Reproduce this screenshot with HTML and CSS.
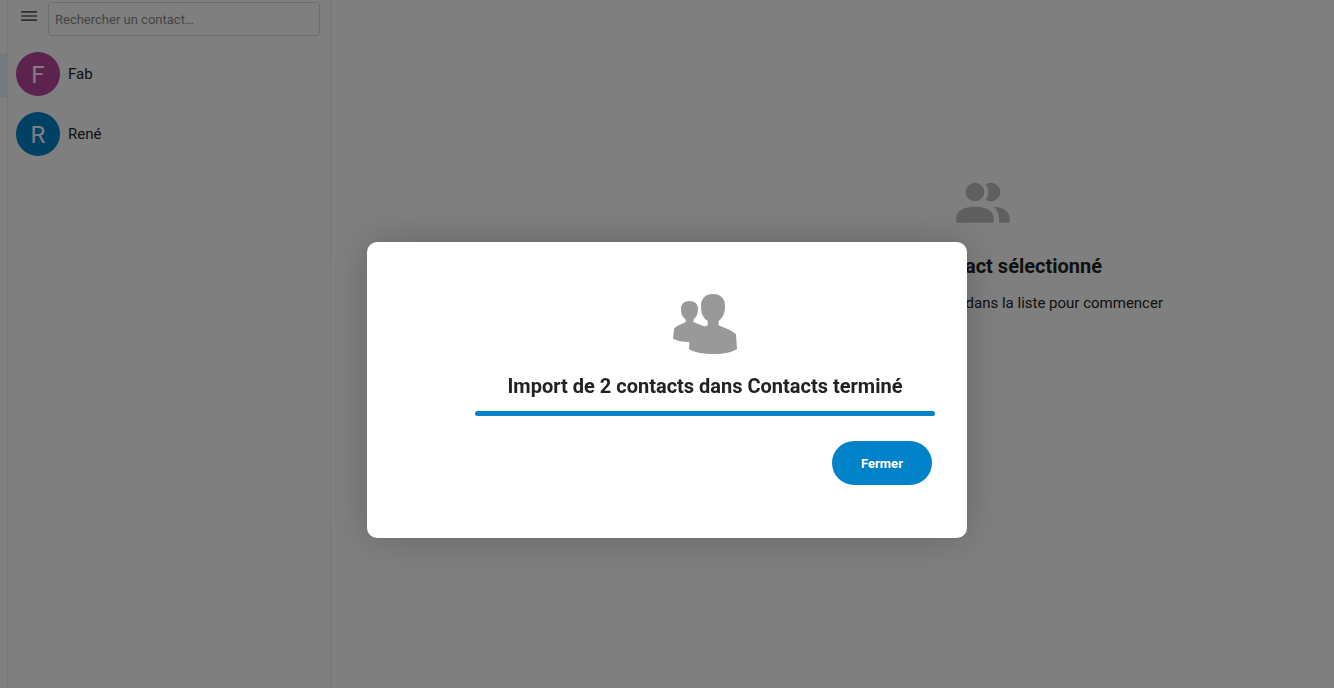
FILE: index.html
```html
<!DOCTYPE html>
<html lang="fr">
<head>
  <meta charset="UTF-8">
  <meta name="viewport" content="width=device-width, initial-scale=1.0">
  <title>Contacts</title>
  <link rel="stylesheet" href="styles.css">
</head>
<body>

  <div class="app">
    <!-- Navigation repliée -->
    <nav class="app-navigation">
      <div class="nav-entry active"></div>
    </nav>

    <!-- Liste des contacts -->
    <aside class="contacts-list">
      <div class="search-header">
        <button class="nav-toggle" aria-label="Ouvrir la navigation">
          <svg viewBox="0 0 16 10" width="16" height="10"><path d="M0 0h16v1.700H0zM0 4.150h16v1.700H0zM0 8.300h16v1.700H0z"/></svg>
        </button>
        <input type="text" class="search" aria-label="Rechercher un contact" placeholder="Rechercher un contact…">
      </div>
      <ul class="contacts">
        <li><a href="#fab" class="contact"><span class="avatar avatar-purple">F</span>Fab</a></li>
        <li><a href="#rene" class="contact"><span class="avatar avatar-blue">R</span>René</a></li>
      </ul>
    </aside>

    <!-- Détails -->
    <main class="details">
      <svg class="empty-icon" viewBox="0 0 24 24" width="64" height="64"><path d="M16 17v2H2v-2s0-4 7-4 7 4 7 4M12.500 7.500A3.500 3.500 0 1 0 9 11a3.500 3.500 0 0 0 3.500-3.500M15.940 13A5.320 5.320 0 0 1 18 17v2h4v-2s0-3.630-6.060-4M15 4a3.390 3.390 0 0 0-1.930.590 5 5 0 0 1 0 5.820A3.390 3.390 0 0 0 15 11a3.500 3.500 0 0 0 0-7z"/></svg>
      <h2>Aucun contact sélectionné</h2>
      <p>Sélectionnez un contact dans la liste pour commencer</p>
    </main>
  </div>

  <!-- Fenêtre d'import -->
  <div class="modal-mask">
    <div class="modal" role="dialog" aria-modal="true" aria-labelledby="importTitle">
      <svg class="import-icon" viewBox="0 0 64 60" width="64" height="60">
        <path d="M16.500 7C11.500 7 8 10 8 14.500C8 19.500 9 22.500 12.700 25.500V28C9 30 4.500 31.500 1.500 34C0.500 37 0.500 41 0 44.500C3.500 47 10 48 17 48L33 44V33C29 31.500 24 29.500 20.500 28V25.500C23.800 22.500 25 19.500 25 14.500C25 10 21.500 7 16.500 7Z"/>
        <path d="M40 0C32.500 0 28 4.500 28 11.500C28 19 29.500 23.500 34.700 27V31.300C29 34 22 36 17.500 39.500C16.500 44 16.300 49 16 55C21 58.500 30 60 40 60C51 60 60 58 64 55C63.500 49 63.500 44 62.800 40C58 36 51.500 34 45.600 31.300V27C50.500 23 52 19 52 11.500C52 4.500 47.500 0 40 0Z"/>
      </svg>
      <h2 id="importTitle">Import de 2 contacts dans Contacts terminé</h2>
      <progress class="import-progress" max="2" value="2" aria-labelledby="importTitle"></progress>
      <button class="close-button">Fermer</button>
    </div>
  </div>

</body>
</html>
```

FILE: styles.css
```css
* {
    box-sizing: border-box;
}
body, html {
    margin: 0;
    height: 100%;
    overflow: hidden;
    font-family: Roboto, 'Liberation Sans', sans-serif;
    font-size: 15px;
    line-height: 22px;
    color: #222;
    background-color: #fff;
}
h2 {
    margin: 0;
    font-size: 20px;
    line-height: 30px;
    font-weight: bold;
}
p {
    margin: 0;
}
.app {
    display: flex;
    height: 100%;
}
.app-navigation {
    flex: 0 0 8px;
    padding-top: 53px;
    border-right: 1px solid #ededed;
}
.nav-entry {
    height: 44px;
}
.nav-entry.active {
    background-color: #e6f3fa;
}
.contacts-list {
    flex: 0 0 323px;
    border-right: 1px solid #ededed;
}
.search-header {
    display: flex;
    align-items: flex-start;
    padding: 2px 10px 8px 8px;
}
.nav-toggle {
    flex: 0 0 32px;
    height: 28px;
    padding: 0 0 0 5px;
    display: flex;
    align-items: center;
    border: none;
    background: none;
    cursor: pointer;
}
.nav-toggle svg {
    fill: #222;
    opacity: 0.7;
}
.search {
    flex: 1;
    min-width: 0;
    height: 34px;
    padding: 6px;
    border: 1px solid #dbdbdb;
    border-radius: 3px;
    font-family: inherit;
    font-size: 13px;
    color: #222;
    background-color: #fff;
}
.search::placeholder {
    color: #888;
}
.contacts {
    margin: 0;
    padding: 0;
    list-style: none;
}
.contact {
    display: flex;
    align-items: center;
    gap: 8px;
    padding: 8px;
    color: #222;
    text-decoration: none;
}
.avatar {
    width: 44px;
    height: 44px;
    border-radius: 50%;
    font-size: 24px;
    line-height: 46px;
    text-align: center;
    color: #fff;
}
.avatar-purple {
    background-color: #b6469d;
}
.avatar-blue {
    background-color: #0082c9;
}
.details {
    flex: 1;
    display: flex;
    flex-direction: column;
    align-items: center;
    padding: 172px 0 0 300px;
}
.empty-icon {
    margin-bottom: 15px;
    fill: #bfbfbf;
}
.details h2 {
    margin-bottom: 11px;
}
.modal-mask {
    position: fixed;
    top: 0;
    left: 0;
    width: 100%;
    height: 100%;
    padding-top: 92px;
    display: flex;
    align-items: center;
    justify-content: center;
    background-color: rgba(0, 0, 0, 0.5);
}
.modal {
    width: 600px;
    max-width: 100%;
    padding: 52px 32px 53px 108px;
    display: flex;
    flex-direction: column;
    align-items: center;
    border-radius: 10px;
    background-color: #fff;
    box-shadow: 0 0 40px rgba(0, 0, 0, 0.2);
}
.import-icon {
    margin-bottom: 17px;
    fill: #999;
}
.modal h2 {
    margin-bottom: 10px;
    text-align: center;
}
.import-progress {
    width: 100%;
    height: 5px;
    display: block;
    appearance: none;
    border: none;
    border-radius: 3px;
    overflow: hidden;
    background-color: #ededed;
}
.import-progress::-webkit-progress-bar {
    background-color: #ededed;
}
.import-progress::-webkit-progress-value {
    background-color: #0082c9;
}
.import-progress::-moz-progress-bar {
    background-color: #0082c9;
}
.close-button {
    align-self: flex-end;
    width: 100px;
    height: 44px;
    margin: 25px 3px 0 0;
    border: none;
    border-radius: 22px;
    font-family: inherit;
    font-size: 13px;
    font-weight: bold;
    color: #fff;
    background-color: #0082c9;
    cursor: pointer;
}
.close-button:hover {
    background-color: #0072b0;
}
```
